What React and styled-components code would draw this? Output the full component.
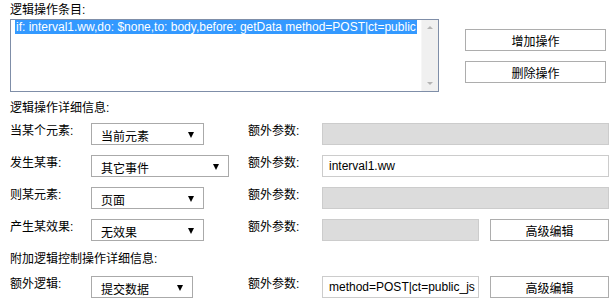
import React from 'react'
import styled, { createGlobalStyle } from 'styled-components'

const Global = createGlobalStyle`
  body {
    margin: 0;
    background: #fff;
    font-family: "Liberation Sans", Arial, "Noto Sans CJK SC", sans-serif;
    font-size: 12px;
    color: #000;
  }
`

const Page = styled.div`
  width: 616px;
  height: 299px;
  padding: 0 10px;
  box-sizing: border-box;
`

const Heading = styled.div`
  height: ${p => p.h}px;
  box-sizing: border-box;
  padding-top: ${p => p.top}px;
  line-height: 16px;
  white-space: nowrap;
`

const Top = styled.div`
  display: flex;
  align-items: flex-start;
`

const ListBox = styled.div`
  width: 429px;
  height: 73px;
  box-sizing: border-box;
  border: 1px solid #7f8ea8;
  display: flex;
  overflow: hidden;
`

const ListText = styled.div`
  flex: 1;
  padding: 1px 0 0 4px;
  white-space: nowrap;
  overflow: hidden;
  line-height: 13px;
`

const Selected = styled.span`
  background: #3399ff;
  color: #fff;
  padding: 0 1px;
`

const ScrollBar = styled.div`
  width: 17px;
  background: #f0f0f0;
  border-left: 1px solid #f6f6f6;
  display: flex;
  flex-direction: column;
  justify-content: space-between;
  align-items: center;
  padding: 6px 0;
  box-sizing: border-box;
`

const Arrow = styled.div`
  width: 0;
  height: 0;
  border-left: 3px solid transparent;
  border-right: 3px solid transparent;
  ${p => (p.up ? 'border-bottom: 3px solid #b4b4b4;' : 'border-top: 3px solid #b4b4b4;')}
`

const ButtonCol = styled.div`
  display: flex;
  flex-direction: column;
  gap: 10px;
  margin: 10px 0 0 26px;
`

const Button = styled.div`
  width: ${p => p.w}px;
  height: 22px;
  box-sizing: border-box;
  border: 1px solid #adadad;
  background: #fff;
  display: flex;
  align-items: center;
  justify-content: center;
  font-size: 12px;
`

const Rows = styled.div`
  display: flex;
  flex-direction: column;
  gap: 10px;
`

const Row = styled.div`
  display: grid;
  grid-template-columns: 81px 157px 74px auto;
  height: 22px;
`

const Label = styled.div`
  line-height: 16px;
  white-space: nowrap;
`

const Select = styled.div`
  width: ${p => p.w}px;
  height: 22px;
  box-sizing: border-box;
  border: 1px solid #aaa;
  background: #fff;
  display: flex;
  align-items: center;
  justify-content: space-between;
  padding: 2px 9px 0 9px;
`

const Caret = styled.div`
  width: 0;
  height: 0;
  border-left: 3px solid transparent;
  border-right: 3px solid transparent;
  border-top: 6px solid #000;
`

const Field = styled.div`
  display: flex;
  gap: 11px;
`

const Input = styled.div`
  width: ${p => p.w}px;
  height: 22px;
  box-sizing: border-box;
  border: 1px solid #ccc;
  background: ${p => (p.disabled ? '#dcdcdc' : '#fff')};
  padding: 0 6px;
  line-height: 20px;
  white-space: nowrap;
  overflow: hidden;
`

const rows = [
  { label: '当某个元素:', value: '当前元素', sw: 113, input: '', disabled: true, iw: 287 },
  { label: '发生某事:', value: '其它事件', sw: 138, input: 'interval1.ww', disabled: false, iw: 287 },
  { label: '则某元素:', value: '页面', sw: 113, input: '', disabled: true, iw: 287 },
  { label: '产生某效果:', value: '无效果', sw: 113, input: '', disabled: true, iw: 157, button: true },
]

function FormRow({ r }) {
  return (
    <Row>
      <Label>{r.label}</Label>
      <div>
        <Select w={r.sw}>
          <span>{r.value}</span>
          <Caret />
        </Select>
      </div>
      <Label>额外参数:</Label>
      <Field>
        <Input w={r.iw} disabled={r.disabled}>{r.input}</Input>
        {r.button && <Button w={119}>高级编辑</Button>}
      </Field>
    </Row>
  )
}

export default function App() {
  return (
    <Page>
      <Global />
      <Heading h={19} top={2}>逻辑操作条目:</Heading>
      <Top>
        <ListBox>
          <ListText>
            <Selected>if: interval1.ww,do: $none,to: body,before: getData method=POST|ct=public</Selected>
          </ListText>
          <ScrollBar>
            <Arrow up />
            <Arrow />
          </ScrollBar>
        </ListBox>
        <ButtonCol>
          <Button w={141}>增加操作</Button>
          <Button w={141}>删除操作</Button>
        </ButtonCol>
      </Top>
      <Heading h={31} top={8}>逻辑操作详细信息:</Heading>
      <Rows>
        {rows.map(r => (
          <FormRow key={r.label} r={r} />
        ))}
      </Rows>
      <Heading h={35} top={10}>附加逻辑控制操作详细信息:</Heading>
      <Row>
        <Label>额外逻辑:</Label>
        <div>
          <Select w={102}>
            <span>提交数据</span>
            <Caret />
          </Select>
        </div>
        <Label>额外参数:</Label>
        <Field>
          <Input w={157}>method=POST|ct=public_js</Input>
          <Button w={119}>高级编辑</Button>
        </Field>
      </Row>
    </Page>
  )
}
